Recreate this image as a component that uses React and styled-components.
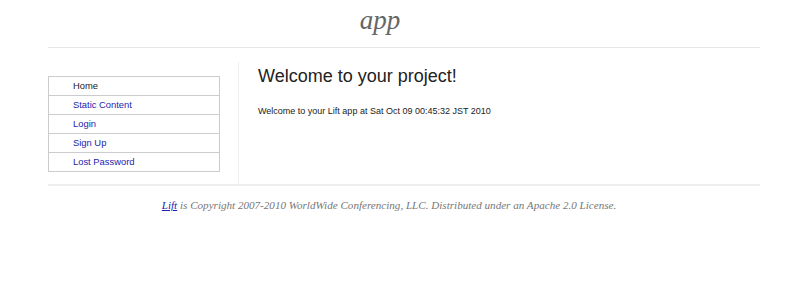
import React from "react";
import styled, { createGlobalStyle } from "styled-components";

const Global = createGlobalStyle`
  body {
    margin: 0;
    background: #fff;
    font-family: "Liberation Sans", Arial, sans-serif;
    color: #222;
  }
`;

const menu = [
  { label: "Home", current: true },
  { label: "Static Content" },
  { label: "Login" },
  { label: "Sign Up" },
  { label: "Lost Password" },
];

const App = () => {
  return (
    <Container>
      <Global />
      <Header>
        <Logo>app</Logo>
      </Header>

      <Main>
        <Sidebar>
          <Menu>
            {menu.map((m) => (
              <MenuItem key={m.label} current={m.current}>
                {m.current ? <span>{m.label}</span> : <a href="#">{m.label}</a>}
              </MenuItem>
            ))}
          </Menu>
        </Sidebar>
        <Content>
          <h1>Welcome to your project!</h1>
          <p>Welcome to your Lift app at Sat Oct 09 00:45:32 JST 2010</p>
        </Content>
      </Main>

      <Footer>
        <a href="#">Lift</a> is Copyright 2007-2010 WorldWide Conferencing, LLC.
        Distributed under an Apache 2.0 License.
      </Footer>
    </Container>
  );
};

export default App;

const Container = styled.div`
  width: 712px;
  margin-left: 48px;
`;

const Header = styled.div`
  height: 47px;
  border-bottom: 1px solid #e6e6e6;
  display: flex;
  justify-content: center;
  padding-right: 48px;
`;

const Logo = styled.div`
  font-family: "Liberation Serif", "DejaVu Serif", serif;
  font-style: italic;
  font-size: 27px;
  color: #666;
  margin-top: 5px;
`;

const Main = styled.div`
  display: flex;
  margin-top: 14px;
  border-bottom: 2px solid #eee;
`;

const Sidebar = styled.div`
  width: 191px;
  height: 122px;
  border-right: 1px solid #eee;
  padding-top: 14px;
  box-sizing: border-box;
`;

const Menu = styled.ul`
  list-style: none;
  margin: 0;
  padding: 0;
  width: 172px;
  box-sizing: border-box;
  border: 1px solid #ccc;
`;

const MenuItem = styled.li`
  height: 18px;
  line-height: 18px;
  padding-left: 24px;
  font-size: 9.4px;
  border-top: ${(p) => (p.current ? "none" : "1px solid #ccc")};
  & a {
    color: #1c1cb0;
    text-decoration: none;
  }
  & span {
    color: #222;
  }
`;

const Content = styled.div`
  padding-left: 19px;
  & h1 {
    font-size: 18px;
    font-weight: normal;
    margin: 4px 0 0;
    color: #222;
  }
  & p {
    font-size: 9px;
    margin: 19px 0 0;
    color: #222;
  }
`;

const Footer = styled.div`
  text-align: center;
  padding-right: 30px;
  margin-top: 13px;
  font-family: "Liberation Serif", "DejaVu Serif", serif;
  font-style: italic;
  font-size: 11.1px;
  color: #777;
  & a {
    color: #1c1cb0;
  }
`;
